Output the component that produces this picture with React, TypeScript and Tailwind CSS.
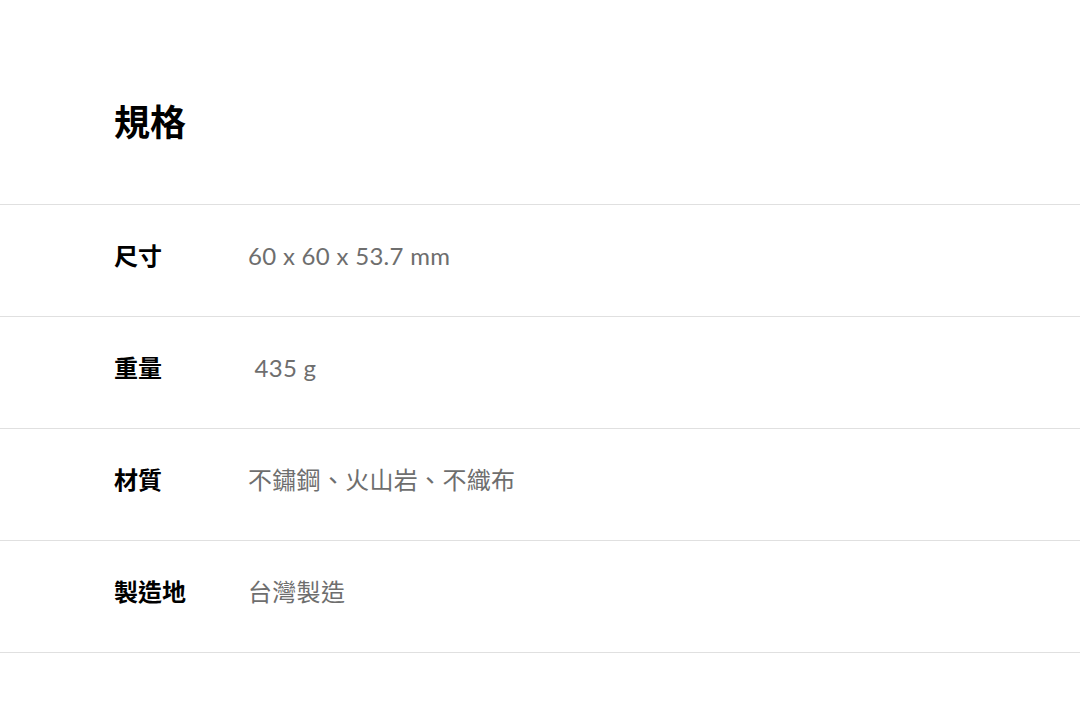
import React from 'react';

const specs = [
    { label: '尺寸', value: '60 x 60 x 53.7 mm' },
    { label: '重量', value: ' 435 g' },
    { label: '材質', value: '不鏽鋼、火山岩、不織布' },
    { label: '製造地', value: '台灣製造' },
];

export default function App() {
    return (
        <div className="min-h-screen bg-white font-['Lato','Noto_Sans_CJK_TC',sans-serif]">
            <h2 className="pl-[114px] pt-[98px] pb-[58px] text-[36px] leading-[48px] font-bold text-black">
                規格
            </h2>
            <div className="border-t border-[#e0e0e0]">
                {specs.map((spec) => (
                    <div
                        key={spec.label}
                        className="flex items-center border-b border-[#e0e0e0] pl-[114px] pt-[35px] pb-[44px]"
                    >
                        <div className="w-[134px] text-[24px] leading-8 font-bold text-black">
                            {spec.label}
                        </div>
                        <div className="whitespace-pre text-[24px] leading-8 tracking-[0.3px] text-[#6e6e6e]">
                            {spec.value}
                        </div>
                    </div>
                ))}
            </div>
        </div>
    );
}
